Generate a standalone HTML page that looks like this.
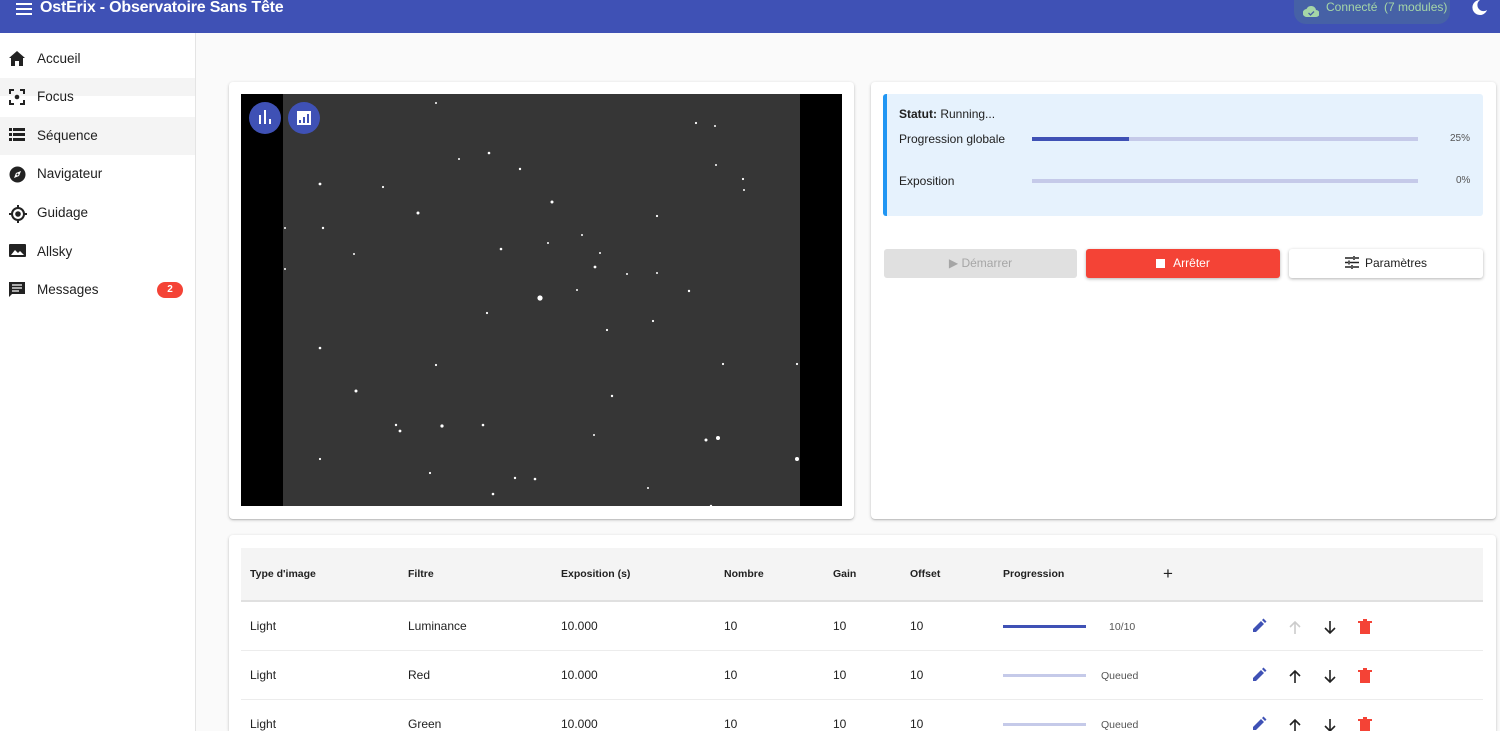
<!DOCTYPE html>
<html><head><meta charset="utf-8"><style>
*{box-sizing:border-box;margin:0;padding:0}
html{width:1500px;height:731px;overflow:hidden}
body{width:1500px;height:731px;overflow:hidden;background:#fafafa;font-family:"Liberation Sans",Arial,sans-serif;color:#212121;position:relative}
.hdr{position:absolute;left:0;top:0;width:1500px;height:33px;background:#3f51b5;color:#fff}
.hdr .t{position:absolute;left:40px;top:-1px;font-size:16px;font-weight:bold;letter-spacing:-.2px}
.chip{position:absolute;left:1294px;top:-2px;width:156px;height:26px;border-radius:0 0 12px 12px;background:#4661a6;color:#a5d6a7;font-size:12px}
.side{position:absolute;left:0;top:33px;width:196px;height:698px;background:#fff;border-right:1px solid #e4e4e4}
.it{position:absolute;left:0;width:195px;height:38px;font-size:13.5px}
.it span{position:absolute;left:37px;top:11px}
.it svg{position:absolute;left:9px;top:11px}
.card{position:absolute;background:#fff;border-radius:4px;box-shadow:0 1px 3px rgba(0,0,0,.2),0 1px 1px rgba(0,0,0,.12)}
.s{position:absolute;font-size:12px}
.bar{position:absolute;height:4px;background:#c5cae9}
.btn{position:absolute;top:249px;height:29px;border-radius:3px;font-size:12px;text-align:center;line-height:29px}
table{position:absolute;left:241px;top:548px;width:1242px;border-collapse:collapse;font-size:12px}
th{background:#f4f4f4;height:53px;text-align:left;font-size:10.5px;font-weight:bold;border-bottom:2px solid #e0e0e0;padding-left:9px}
td{height:49px;border-bottom:1px solid #ececec;padding-left:9px;position:relative}
.pb{display:inline-block;width:83px;height:3px;background:#c5cae9;vertical-align:middle}
</style></head><body>
<div class="hdr">
<svg style="position:absolute;left:16px;top:3px" width="16" height="12" viewBox="0 0 16 12"><rect y="0" width="16" height="2" fill="#fff"/><rect y="5" width="16" height="2" fill="#fff"/><rect y="10" width="16" height="2" fill="#fff"/></svg>
<div class="t">OstErix - Observatoire Sans Tête</div>
<div class="chip"><svg style="position:absolute;left:9px;top:7px" width="16" height="12" viewBox="0 0 16 12"><path d="M4 12a4 4 0 0 1-.5-8A5 5 0 0 1 13 5a3.5 3.5 0 0 1 0 7z" fill="#a5d6a7"/><path d="M5.5 8l2 2 3.5-3.5" stroke="#4661a6" stroke-width="1.3" fill="none"/></svg><span style="position:absolute;left:32px;top:2px">Connecté&nbsp; (7 modules)</span></div>
<svg style="position:absolute;left:1472px;top:0" width="15" height="16" viewBox="0 0 15 16"><path d="M8 0a7.5 7.5 0 1 0 7 10A6 6 0 0 1 8 0z" fill="#fff"/></svg>
</div>
<div class="side">
<div class="it" style="top:7px"><svg width="16" height="15" viewBox="0 0 16 15"><path d="M8 0L0 7h2v8h4v-5h4v5h4V7h2z" fill="#222"/></svg><span>Accueil</span></div>
<div class="it" style="top:45px;background:linear-gradient(#f4f4f4 0,#f4f4f4 18px,#fff 18px)"><svg width="16" height="16" viewBox="0 0 16 16"><path d="M1 5V1h4M11 1h4v4M15 11v4h-4M5 15H1v-4" stroke="#222" stroke-width="2" fill="none"/><circle cx="8" cy="8" r="2.3" fill="#222"/></svg><span>Focus</span></div>
<div class="it" style="top:84px;background:#f4f4f4"><svg width="16" height="14" viewBox="0 0 16 14"><path d="M0 0h3v3H0zM4 0h12v3H4zM0 5h3v3H0zM4 5h12v3H4zM0 10h3v3H0zM4 10h12v3H4z" fill="#222"/></svg><span>Séquence</span></div>
<div class="it" style="top:122px"><svg width="17" height="17" viewBox="0 0 17 17"><circle cx="8.5" cy="8.5" r="8" fill="#222"/><path d="M12 5l-2 5-5 2 2-5z" fill="#fff"/><circle cx="8.5" cy="8.5" r="1" fill="#222"/></svg><span>Navigateur</span></div>
<div class="it" style="top:161px"><svg width="18" height="18" viewBox="0 0 18 18"><circle cx="9" cy="9" r="6" stroke="#222" stroke-width="2" fill="none"/><circle cx="9" cy="9" r="2.8" fill="#222"/><path d="M9 0v3M9 15v3M0 9h3M15 9h3" stroke="#222" stroke-width="2"/></svg><span>Guidage</span></div>
<div class="it" style="top:200px"><svg width="17" height="13" viewBox="0 0 17 13"><rect width="17" height="13" rx="1" fill="#222"/><path d="M2 11l4-5 3 3 2-2 4 4z" fill="#fff"/></svg><span>Allsky</span></div>
<div class="it" style="top:238px"><svg width="16" height="16" viewBox="0 0 16 16"><path d="M0 0h16v12H3l-3 3z" fill="#222"/><path d="M3 3h10M3 6h10M3 9h7" stroke="#fff" stroke-width="1.3"/></svg><span>Messages</span><div style="position:absolute;left:157px;top:11px;width:26px;height:16px;border-radius:8px;background:#f44336;color:#fff;font-size:10px;font-weight:bold;text-align:center;line-height:16px">2</div></div>
</div>

<div class="card" style="left:229px;top:82px;width:625px;height:437px"></div>
<svg style="position:absolute;left:241px;top:94px" width="601" height="412">
<rect width="601" height="412" fill="#000"/>
<rect x="42" width="517" height="412" fill="#363636"/>
<g fill="#fff" transform="translate(-241 -94)">
<circle cx="540" cy="298" r="2.6"/>
<circle cx="436" cy="103" r="1"/><circle cx="489" cy="153" r="1.3"/><circle cx="459" cy="159" r="1"/><circle cx="320" cy="184" r="1.4"/><circle cx="383" cy="187" r="1.1"/><circle cx="418" cy="213" r="1.5"/><circle cx="323" cy="228" r="1.2"/><circle cx="354" cy="254" r="1"/><circle cx="501" cy="249" r="1.3"/><circle cx="595" cy="267" r="1.4"/><circle cx="577" cy="290" r="1"/><circle cx="487" cy="313" r="1.1"/><circle cx="607" cy="330" r="1.1"/><circle cx="320" cy="348" r="1.3"/><circle cx="436" cy="365" r="1.1"/><circle cx="356" cy="391" r="1.5"/><circle cx="612" cy="396" r="1.2"/><circle cx="396" cy="425" r="1.2"/><circle cx="400" cy="431" r="1.4"/><circle cx="442" cy="426" r="1.6"/><circle cx="483" cy="425" r="1.3"/><circle cx="515" cy="478" r="1.2"/><circle cx="718" cy="438" r="2"/><circle cx="706" cy="440" r="1.5"/><circle cx="797" cy="459" r="2"/><circle cx="535" cy="479" r="1.3"/><circle cx="430" cy="473" r="1.1"/><circle cx="493" cy="494" r="1.3"/><circle cx="648" cy="488" r="1"/><circle cx="743" cy="179" r="1.1"/><circle cx="716" cy="165" r="1"/><circle cx="552" cy="202" r="1.5"/><circle cx="657" cy="216" r="1.1"/><circle cx="689" cy="291" r="1.2"/><circle cx="744" cy="190" r="1"/><circle cx="696" cy="123" r="1.1"/><circle cx="715" cy="126" r="1"/><circle cx="582" cy="235" r="1"/><circle cx="548" cy="243" r="1"/><circle cx="520" cy="169" r="1.2"/><circle cx="653" cy="321" r="1.1"/><circle cx="723" cy="364" r="1.1"/><circle cx="711" cy="506" r="1.2"/><circle cx="594" cy="435" r="1"/><circle cx="627" cy="274" r="1"/><circle cx="600" cy="253" r="1"/><circle cx="320" cy="459" r="1.1"/><circle cx="285" cy="269" r="1"/><circle cx="285" cy="228" r="1"/><circle cx="797" cy="364" r="1.1"/><circle cx="657" cy="273" r="1"/>
</g>
<circle cx="24" cy="24" r="16" fill="#3f51b5"/><path d="M18 30V21h2v9zM23 30V16h2v14zM28 30v-5h2v5z" fill="#fff"/>
<circle cx="63" cy="24" r="16" fill="#3f51b5"/><rect x="56" y="17" width="14" height="14" fill="#fff"/><path d="M58 29v-3h2v3zM62 29v-6h2v6zM66 29V20h2v9z" fill="#3f51b5"/>
</svg>

<div class="card" style="left:871px;top:82px;width:625px;height:437px"></div>
<div style="position:absolute;left:883px;top:94px;width:600px;height:122px;background:#e6f2fd;border-left:4px solid #2196f3;border-radius:3px"></div>
<div class="s" style="left:899px;top:107px"><b>Statut:</b> Running...</div>
<div class="s" style="left:899px;top:132px">Progression globale</div>
<div class="bar" style="left:1032px;top:137px;width:386px"></div><div class="bar" style="left:1032px;top:137px;width:97px;background:#3f51b5"></div>
<div class="s" style="left:1450px;top:133px;font-size:10px;color:#555">25%</div>
<div class="s" style="left:899px;top:174px">Exposition</div>
<div class="bar" style="left:1032px;top:179px;width:386px"></div>
<div class="s" style="left:1456px;top:175px;font-size:10px;color:#555">0%</div>
<div class="btn" style="left:884px;width:193px;background:#e0e0e0;color:#a6a6a6">▶ Démarrer</div>
<div class="btn" style="left:1086px;width:194px;background:#f44336;color:#fff;box-shadow:0 1px 3px rgba(0,0,0,.3)"><span style="display:inline-block;width:9px;height:9px;background:#fff;margin-right:8px;vertical-align:-1px"></span>Arrêter</div>
<div class="btn" style="left:1289px;width:194px;background:#fff;box-shadow:0 1px 3px rgba(0,0,0,.3)"><svg width="14" height="13" viewBox="0 0 14 13" style="vertical-align:-2px;margin-right:6px"><path d="M0 2h8M10 2h4M0 6.5h3M5 6.5h9M0 11h6M8 11h6M9 0v4M4 4.5v4M7 9v4" stroke="#222" stroke-width="1.5"/></svg>Paramètres</div>

<div class="card" style="left:229px;top:535px;width:1267px;height:196px;border-radius:4px 4px 0 0"></div>
<table>
<tr><th style="width:158px">Type d'image</th><th style="width:153px">Filtre</th><th style="width:163px">Exposition (s)</th><th style="width:109px">Nombre</th><th style="width:77px">Gain</th><th style="width:93px">Offset</th><th style="width:160px">Progression</th><th style="width:88px"><span style="font-size:17px;font-weight:normal">+</span></th><th></th></tr>
<tr><td>Light</td><td>Luminance</td><td>10.000</td><td>10</td><td>10</td><td>10</td><td colspan="2"><span class="pb" style="background:#3f51b5"></span><span style="margin-left:23px;font-size:10.5px;color:#555">10/10</span></td><td></td></tr>
<tr><td>Light</td><td>Red</td><td>10.000</td><td>10</td><td>10</td><td>10</td><td colspan="2"><span class="pb"></span><span style="margin-left:15px;font-size:10.5px;color:#555">Queued</span></td><td></td></tr>
<tr><td style="border:0">Light</td><td style="border:0">Green</td><td style="border:0">10.000</td><td style="border:0">10</td><td style="border:0">10</td><td style="border:0">10</td><td colspan="2" style="border:0"><span class="pb"></span><span style="margin-left:15px;font-size:10.5px;color:#555">Queued</span></td><td style="border:0"></td></tr>
</table>
<svg style="position:absolute;left:1250px;top:617px" width="130" height="114">
<g id="r"><path d="M3 15l0-3 8-8 3 3-8 8zM12 3l1.5-1.5 3 3L15 6z" fill="#3f51b5"/><path d="M45 17V5M40 10l5-5 5 5" stroke="#222" stroke-width="1.6" fill="none"/><path d="M80 4v12M75 11l5 5 5-5" stroke="#222" stroke-width="1.6" fill="none"/><path d="M110 6h10v11h-10zM108 4h14v2h-14zM113 2h4v2h-4z" fill="#f44336"/></g>
<use href="#r" y="49"/><use href="#r" y="98"/>
<rect x="38" y="2" width="15" height="17" fill="#fff"/><path d="M45 17V5M40 10l5-5 5 5" stroke="#ccc" stroke-width="1.6" fill="none"/>
</svg>
</body></html>
